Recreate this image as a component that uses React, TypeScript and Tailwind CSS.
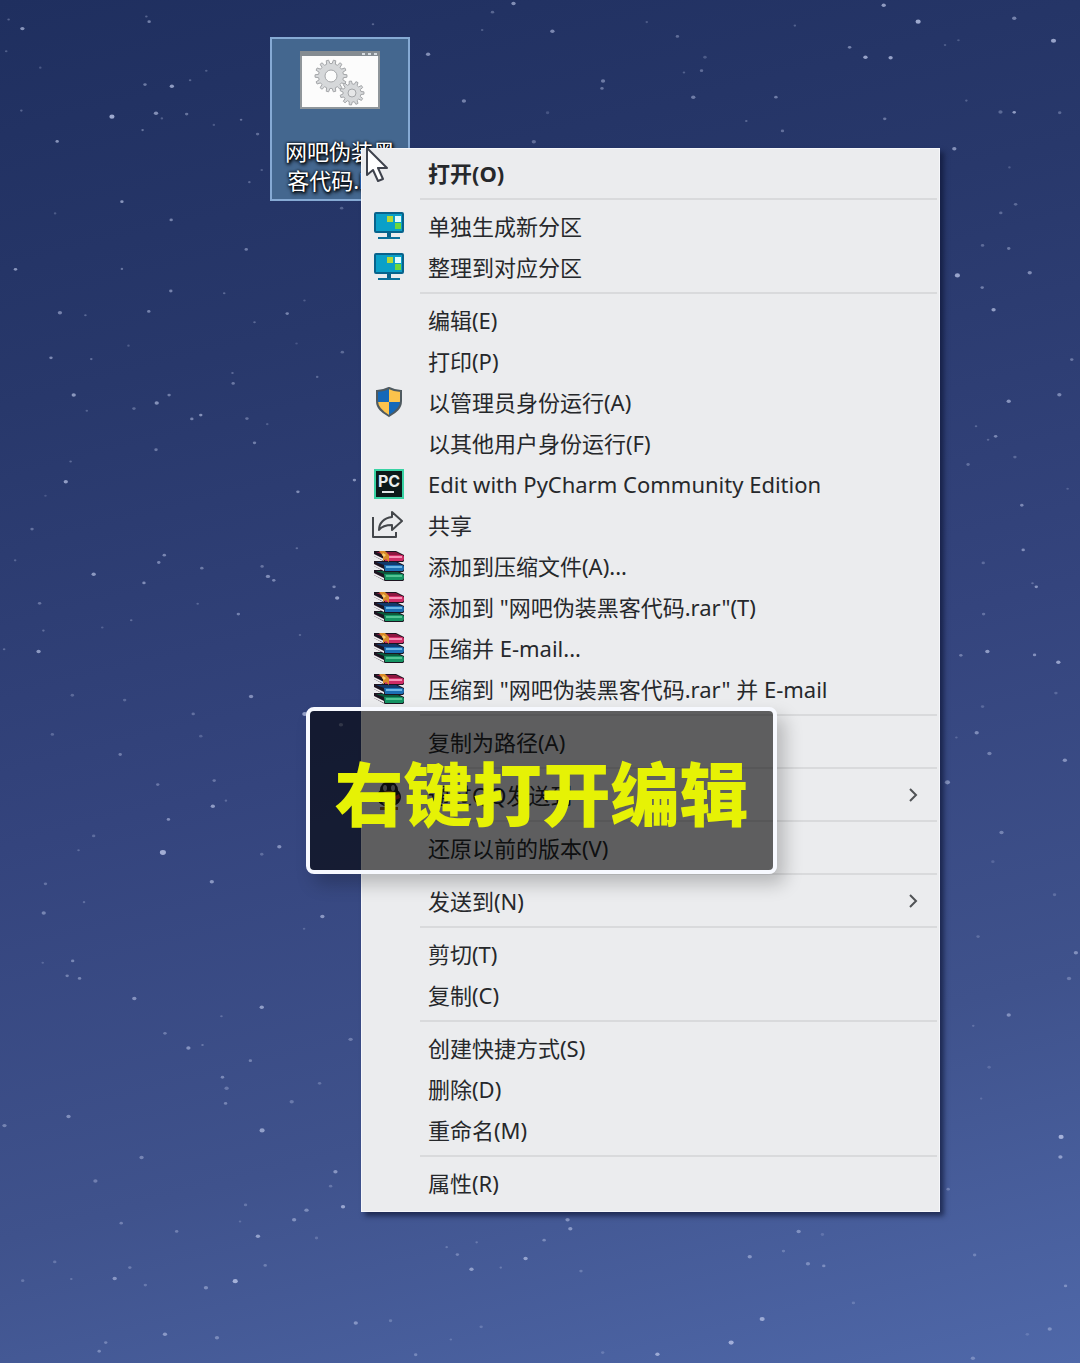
import type { ReactNode } from "react";

type Star = [x: number, y: number, radius: number, opacity: number];

/* Star positions in a 1568-unit square per quadrant of the sky. */
const skyTopLeft: Star[] = [
  [25, 45, 3, 0.4], [65, 66, 5, 0.75], [425, 38, 3, 0.4], [433, 50, 4, 0.6], [18, 118, 3, 0.35], [117, 156, 3, 0.3],
  [421, 195, 4, 0.55], [499, 199, 5, 0.8], [552, 185, 3, 0.4], [599, 163, 3, 0.35], [62, 255, 3, 0.4], [325, 269, 6, 0.9],
  [453, 261, 5, 0.7], [470, 273, 3, 0.35], [542, 263, 4, 0.5], [414, 300, 3, 0.5], [621, 288, 3, 0.3], [700, 276, 3, 0.5],
  [748, 309, 4, 0.45], [166, 326, 4, 0.75], [354, 465, 4, 0.75], [160, 492, 3, 0.3], [497, 507, 4, 0.6], [724, 420, 3, 0.4],
  [760, 392, 3, 0.35], [715, 575, 4, 0.55], [45, 621, 4, 0.75], [354, 620, 3, 0.5], [496, 671, 4, 0.6], [651, 676, 3, 0.4],
  [174, 721, 5, 0.6], [248, 727, 3, 0.4], [432, 718, 4, 0.6], [834, 723, 4, 0.6], [739, 743, 3, 0.4], [884, 693, 3, 0.3],
  [148, 825, 4, 0.65], [265, 828, 3, 0.45], [373, 797, 3, 0.3], [994, 812, 4, 0.4], [861, 792, 3, 0.25], [675, 860, 3, 0.4],
  [677, 884, 4, 0.5], [921, 869, 3, 0.4], [214, 911, 5, 0.75], [491, 911, 4, 0.55], [455, 929, 5, 0.7], [389, 942, 4, 0.4],
  [252, 947, 3, 0.35], [557, 966, 4, 0.6], [583, 957, 4, 0.7], [717, 965, 4, 0.45], [776, 978, 3, 0.3], [739, 1021, 4, 0.55],
  [453, 1037, 4, 0.5], [205, 1064, 3, 0.4], [191, 1111, 5, 0.8], [1029, 1107, 4, 0.7], [865, 1134, 4, 0.65], [93, 1220, 4, 0.45],
  [477, 1280, 4, 0.6], [461, 1297, 4, 0.6], [586, 1310, 4, 0.5], [862, 1264, 3, 0.4], [272, 1324, 5, 0.75], [418, 1344, 4, 0.65],
  [761, 1306, 4, 0.45], [778, 1329, 5, 0.65], [795, 1338, 4, 0.6], [970, 1353, 4, 0.6], [979, 1379, 5, 0.8], [115, 1391, 4, 0.45],
  [692, 1416, 4, 0.55], [574, 1392, 3, 0.35], [381, 1430, 3, 0.4], [297, 1447, 3, 0.3], [126, 1454, 3, 0.4], [112, 1502, 5, 0.75],
  [871, 1464, 3, 0.35], [1243, 125, 5, 0.7], [1347, 233, 5, 0.6], [1083, 56, 3, 0.4], [1430, 28, 4, 0.4], [1491, 8, 5, 0.7],
  [1400, 69, 3, 0.35], [1550, 327, 5, 0.45], [992, 480, 4, 0.35], [44, 1292, 3, 0.35], [12, 1497, 3, 0.4], [132, 1143, 3, 0.25],
];

const skyTopRight: Star[] = [
  [36, 72, 5, 0.65], [998, 12, 5, 0.8], [1098, 50, 6, 0.9], [1377, 42, 5, 0.6], [1491, 94, 6, 0.85], [899, 109, 4, 0.6],
  [945, 132, 5, 0.85], [1018, 133, 5, 0.85], [740, 59, 3, 0.35], [310, 51, 3, 0.3], [399, 84, 4, 0.45], [479, 132, 4, 0.3],
  [469, 163, 4, 0.45], [418, 167, 3, 0.35], [183, 187, 5, 0.55], [180, 204, 4, 0.5], [445, 224, 5, 0.55], [685, 224, 4, 0.55],
  [22, 260, 4, 0.25], [599, 279, 3, 0.4], [704, 302, 4, 0.45], [1001, 274, 4, 0.5], [1176, 104, 3, 0.3], [1215, 93, 3, 0.3],
  [1238, 232, 3, 0.35], [1377, 259, 4, 0.8], [1337, 258, 5, 0.4], [1509, 260, 4, 0.4], [1203, 343, 5, 0.7], [1363, 386, 3, 0.3],
  [1381, 471, 4, 0.4], [1338, 491, 4, 0.4], [1285, 566, 4, 0.4], [1361, 573, 4, 0.5], [1212, 635, 6, 0.85], [1422, 629, 5, 0.65],
  [1284, 663, 4, 0.55], [1317, 714, 5, 0.8], [1544, 829, 4, 0.5], [1508, 910, 5, 0.6], [1361, 925, 5, 0.7], [1266, 983, 3, 0.35],
  [1323, 1006, 4, 0.6], [1301, 1014, 3, 0.35], [1379, 1054, 4, 0.35], [1243, 1071, 4, 0.4], [1399, 1165, 4, 0.6], [1403, 1268, 4, 0.65],
  [1287, 1298, 4, 0.35], [1430, 1345, 3, 0.4], [1441, 1353, 4, 0.7], [1288, 1416, 4, 0.4], [1299, 1502, 5, 0.75], [1222, 1511, 4, 0.5],
  [1436, 1510, 4, 0.65], [1505, 1527, 5, 0.8], [1532, 1127, 3, 0.3],
];

const skyBottomLeft: Star[] = [
  [210, 35, 4, 0.35], [362, 46, 4, 0.35], [729, 38, 5, 0.65], [561, 78, 4, 0.4], [152, 125, 4, 0.35], [583, 129, 4, 0.3],
  [349, 171, 4, 0.5], [622, 231, 4, 0.45], [458, 240, 4, 0.45], [656, 277, 3, 0.35], [618, 290, 5, 0.75], [489, 320, 4, 0.65],
  [272, 358, 4, 0.35], [228, 391, 3, 0.35], [473, 396, 7, 0.9], [811, 383, 5, 0.65], [760, 400, 4, 0.35], [615, 463, 5, 0.7],
  [132, 468, 4, 0.4], [127, 535, 5, 0.55], [244, 510, 3, 0.35], [936, 543, 5, 0.7], [883, 571, 3, 0.3], [211, 645, 4, 0.55],
  [124, 649, 3, 0.3], [195, 679, 4, 0.5], [231, 685, 4, 0.55], [390, 731, 5, 0.65], [760, 751, 5, 0.75], [643, 772, 3, 0.35],
  [479, 811, 4, 0.45], [547, 845, 5, 0.65], [588, 838, 3, 0.4], [1018, 825, 5, 0.45], [727, 874, 4, 0.5], [646, 912, 4, 0.55],
  [658, 937, 5, 0.4], [655, 972, 4, 0.5], [928, 926, 4, 0.35], [847, 968, 5, 0.4], [199, 1002, 5, 0.6], [13, 1023, 5, 0.5],
  [761, 1034, 6, 0.75], [411, 1096, 5, 0.5], [277, 1150, 5, 0.45], [974, 1129, 5, 0.65], [960, 1162, 4, 0.35], [996, 1209, 5, 0.8],
  [890, 1217, 5, 0.55], [713, 1205, 4, 0.35], [854, 1239, 5, 0.6], [352, 1247, 4, 0.45], [697, 1243, 3, 0.3], [749, 1277, 5, 0.75],
  [513, 1266, 4, 0.45], [919, 1281, 4, 0.3], [159, 1336, 4, 0.35], [770, 1344, 4, 0.4], [377, 1349, 4, 0.4], [333, 1374, 5, 0.65],
  [207, 1375, 3, 0.35], [422, 1389, 4, 0.35], [683, 1380, 6, 0.9], [598, 1395, 5, 0.55], [66, 1379, 4, 0.35], [1033, 1476, 5, 0.6],
  [1134, 1471, 4, 0.35], [479, 1502, 5, 0.65], [630, 1510, 5, 0.5], [307, 1521, 4, 0.45], [288, 1541, 4, 0.5], [1207, 1549, 4, 0.45],
  [1297, 1302, 3, 0.35], [1328, 1319, 4, 0.45], [1384, 1291, 3, 0.35], [1369, 1353, 5, 0.7], [1526, 1328, 5, 0.75], [1454, 1349, 3, 0.35],
  [1397, 1485, 4, 0.3], [1309, 1514, 3, 0.3], [990, 103, 5, 0.6], [885, 78, 6, 0.8],
];

const skyBottomRight: Star[] = [
  [1268, 121, 5, 0.6], [1209, 132, 3, 0.3], [1305, 169, 5, 0.5], [1524, 184, 5, 0.65], [1183, 235, 6, 0.65], [1340, 350, 5, 0.5],
  [1315, 417, 4, 0.25], [1285, 61, 4, 0.3], [1498, 30, 4, 0.3], [1272, 589, 4, 0.3], [1556, 626, 5, 0.6], [1536, 685, 5, 0.4],
  [1361, 769, 5, 0.6], [1258, 794, 3, 0.3], [1304, 889, 4, 0.25], [1513, 1049, 6, 0.9], [1511, 1095, 5, 0.7], [1185, 1169, 4, 0.45],
  [80, 1239, 5, 0.65], [88, 1260, 5, 0.65], [12, 1286, 4, 0.5], [751, 1266, 5, 0.55], [820, 1273, 4, 0.25], [707, 1311, 4, 0.35],
  [609, 1324, 5, 0.6], [778, 1340, 5, 0.5], [824, 1345, 4, 0.5], [119, 1357, 4, 0.35], [910, 1430, 4, 0.3], [645, 1467, 6, 0.8],
  [555, 1521, 6, 0.85], [341, 1548, 5, 0.8], [1262, 1320, 4, 0.4], [1526, 1391, 4, 0.5], [1480, 1490, 5, 0.5], [1415, 1502, 4, 0.25],
  [1257, 1557, 5, 0.45], [182, 1544, 4, 0.3], [1494, 493, 4, 0.3], [1281, 961, 3, 0.25],
];

const skyQuadrants = [
  { stars: skyTopLeft, transform: "translate(0 0) scale(0.3444 0.4337)" },
  { stars: skyTopRight, transform: "translate(540 0) scale(0.3444 0.4337)" },
  { stars: skyBottomLeft, transform: "translate(0 680) scale(0.3444 0.4356)" },
  { stars: skyBottomRight, transform: "translate(540 680) scale(0.3444 0.4356)" },
];

function NightSky() {
  return (
    <svg
      className="absolute inset-0 h-full w-full opacity-85"
      viewBox="0 0 1080 1363"
      preserveAspectRatio="xMidYMid slice"
      aria-hidden="true"
    >
      {skyQuadrants.map(({ stars, transform }) => (
        <g key={transform} transform={transform} fill="#c3cdee">
          {stars.map(([x, y, r, opacity]) => (
            <ellipse key={`${x}-${y}`} cx={x} cy={y} rx={r * 1.25} ry={r * 0.8} opacity={opacity} />
          ))}
        </g>
      ))}
    </svg>
  );
}

function gearPath(cx: number, cy: number, outer: number, inner: number, teeth: number) {
  const points: string[] = [];
  const step = (Math.PI * 2) / teeth;
  for (let i = 0; i < teeth; i++) {
    const a = i * step;
    const corners: [number, number][] = [
      [a - step * 0.3, inner],
      [a - step * 0.17, outer],
      [a + step * 0.17, outer],
      [a + step * 0.3, inner],
    ];
    for (const [angle, r] of corners) {
      points.push(`${(cx + Math.cos(angle) * r).toFixed(2)} ${(cy + Math.sin(angle) * r).toFixed(2)}`);
    }
  }
  return `M${points.join("L")}Z`;
}

function BatchFileIcon() {
  return (
    <svg className="h-[58px] w-20" viewBox="0 0 80 58" aria-hidden="true">
      <rect x="1" y="1" width="78" height="56" fill="#fcfcfc" stroke="#8f969b" strokeWidth="2" />
      <rect x="0" y="0" width="80" height="5" fill="#858c92" />
      <path d="M62 2h3v2h-3zM68 2h3v2h-3zM74 2h3v2h-3z" fill="#d5dbe0" />
      <g fill="#d6d8da" stroke="#a4a6a9" strokeWidth="1">
        <path d={gearPath(31, 25, 16, 12.5, 14)} />
        <circle cx="31" cy="25" r="6" fill="#fcfcfc" />
        <path d={gearPath(52, 42, 12, 9, 11)} />
        <circle cx="52" cy="42" r="4" fill="#e6e7e8" />
      </g>
    </svg>
  );
}

function MonitorIcon() {
  return (
    <svg className="size-8" viewBox="0 0 32 32" aria-hidden="true">
      <rect x="2" y="3" width="28" height="19" rx="1" fill="#0aa0c8" stroke="#08638c" strokeWidth="2" />
      <rect x="14" y="6" width="6" height="6" fill="#b5d934" />
      <rect x="22" y="6" width="6" height="6" fill="#dffaff" />
      <rect x="22" y="13" width="6" height="6" fill="#6ed83c" />
      <path d="M14 22h4v5h-4z" fill="#08638c" />
      <path d="M5 27h22v2H5z" fill="#0a6f9a" />
    </svg>
  );
}

const shield = "M16 2c4 2 8 3 12 3v10c0 7-5 11-12 15C9 26 4 22 4 15V5c4 0 8-1 12-3z";

function ShieldIcon() {
  return (
    <svg className="size-8" viewBox="0 0 32 32" aria-hidden="true">
      <clipPath id="shield-shape">
        <path d={shield} />
      </clipPath>
      <g clipPath="url(#shield-shape)">
        <path d="M0 0h16v16H0zM16 16h16v16H16z" fill="#1468b8" />
        <path d="M16 0h16v16H16zM0 16h16v16H0z" fill="#fbc34c" />
      </g>
      <path d={shield} fill="none" stroke="#4f5a60" strokeWidth="2" />
    </svg>
  );
}

function PyCharmIcon() {
  return (
    <span className="flex size-[30px] flex-col items-start justify-between border-2 border-[#38d3a4] bg-[#0c1a1a] px-0.5 pt-0.5 pb-1">
      <span className="font-['Inter',sans-serif] text-base leading-4 font-bold text-[#e8eeee]">PC</span>
      <span className="ml-1 h-0.5 w-3 bg-[#dfe6e6]" />
    </span>
  );
}

function ShareIcon() {
  return (
    <svg
      className="mr-1 size-8"
      viewBox="0 0 32 32"
      fill="none"
      stroke="#44474b"
      strokeWidth="2"
      strokeLinejoin="round"
      aria-hidden="true"
    >
      <path d="M2 8v20h23v-5" />
      <path d="M21 3l10 9-10 9v-5c-6 0-10 1-13 5 0-7 5-12 13-13z" />
    </svg>
  );
}

const bookColors = [
  { y: 20, cover: "#0b5a3c", spine: "#159463", shine: "#52c493" },
  { y: 11, cover: "#123a6c", spine: "#1c6fb4", shine: "#6db6e6" },
  { y: 1, cover: "#8e1640", spine: "#cf2c66", shine: "#f890b6" },
];

function ArchiveIcon() {
  return (
    <svg className="size-8" viewBox="0 0 32 32" aria-hidden="true">
      {bookColors.map(({ y, cover, spine, shine }) => (
        <g key={y} transform={`translate(0 ${y})`}>
          <path d="M1 0h22l8 4v6l-1 1H12L1 5z" fill="#1c1420" />
          <path d="M3 1h20l6 3H11z" fill={cover} />
          <path d="M11 4h18q2 0 2 3t-2 3H12z" fill={spine} />
          <path d="M13 5h16v2H13z" fill={shine} />
          <path d="M1 3l10 5v2L1 5z" fill="#f2eff1" />
        </g>
      ))}
      <path d="M6 1h6l4 4v7l-3-3-3 2V6z" fill="#d88a28" />
      <path d="M10 3l3 2-2 2-2-2z" fill="#f8d070" />
    </svg>
  );
}

function QQIcon() {
  return (
    <svg className="size-8" viewBox="0 0 32 32" aria-hidden="true">
      <ellipse cx="16" cy="18" rx="12" ry="10" fill="#202124" />
      <ellipse cx="16" cy="11" rx="9" ry="9" fill="#202124" />
      <ellipse cx="16" cy="21" rx="7" ry="7" fill="#8f8f8f" />
      <path d="M6 15c6 4 14 4 20 0l1 4c-7 4-15 4-22 0z" fill="#b8322c" />
      <ellipse cx="12" cy="9" rx="2" ry="3" fill="#aaa" />
      <ellipse cx="20" cy="9" rx="2" ry="3" fill="#aaa" />
      <ellipse cx="16" cy="14" rx="6" ry="2" fill="#c08020" />
      <path d="M7 28h8v3H7zM17 28h8v3h-8z" fill="#a06a1c" />
    </svg>
  );
}

function SubmenuArrow() {
  return (
    <svg className="mr-5 h-4 w-3" viewBox="0 0 12 16" fill="none" stroke="#505255" strokeWidth="2" aria-hidden="true">
      <path d="M3 2l6 6-6 6" />
    </svg>
  );
}

function Pointer() {
  return (
    <svg className="absolute top-[147px] left-[366px] h-9 w-6" viewBox="0 0 24 36" aria-hidden="true">
      <path
        d="M1 1v27l6-5 5 11 5-2-5-11h9z"
        fill="#fff"
        stroke="#3f434d"
        strokeWidth="2"
        strokeLinejoin="round"
      />
    </svg>
  );
}

type MenuEntry = { label: string; icon?: ReactNode; bold?: boolean; submenu?: boolean };

const menuGroups: MenuEntry[][] = [
  [{ label: "打开(O)", bold: true }],
  [
    { label: "单独生成新分区", icon: <MonitorIcon /> },
    { label: "整理到对应分区", icon: <MonitorIcon /> },
  ],
  [
    { label: "编辑(E)" },
    { label: "打印(P)" },
    { label: "以管理员身份运行(A)", icon: <ShieldIcon /> },
    { label: "以其他用户身份运行(F)" },
    { label: "Edit with PyCharm Community Edition", icon: <PyCharmIcon /> },
    { label: "共享", icon: <ShareIcon /> },
    { label: "添加到压缩文件(A)...", icon: <ArchiveIcon /> },
    { label: '添加到 "网吧伪装黑客代码.rar"(T)', icon: <ArchiveIcon /> },
    { label: "压缩并 E-mail...", icon: <ArchiveIcon /> },
    { label: '压缩到 "网吧伪装黑客代码.rar" 并 E-mail', icon: <ArchiveIcon /> },
  ],
  [{ label: "复制为路径(A)" }],
  [{ label: "通过QQ发送到", icon: <QQIcon />, submenu: true }],
  [{ label: "还原以前的版本(V)" }],
  [{ label: "发送到(N)", submenu: true }],
  [{ label: "剪切(T)" }, { label: "复制(C)" }],
  [{ label: "创建快捷方式(S)" }, { label: "删除(D)" }, { label: "重命名(M)" }],
  [{ label: "属性(R)" }],
];

function MenuItem({ label, icon, bold, submenu }: MenuEntry) {
  return (
    <button
      type="button"
      role="menuitem"
      aria-haspopup={submenu ? "menu" : undefined}
      className="flex h-[41px] w-full items-center text-left hover:bg-white"
    >
      <span className="flex w-[54px] shrink-0 justify-center">{icon}</span>
      <span className={bold ? "ml-3 flex-1 font-bold whitespace-nowrap" : "ml-3 flex-1 whitespace-nowrap"}>{label}</span>
      {submenu && <SubmenuArrow />}
    </button>
  );
}

function ContextMenu() {
  return (
    <div
      role="menu"
      aria-label="文件菜单"
      className="absolute top-[148px] left-[361px] w-[579px] border border-[#f6f7fa] bg-[#ebecee] pt-[3px] pb-2 text-[22px] leading-7 text-[#26282b] shadow-[4px_4px_5px_rgba(12,20,50,0.65)]"
    >
      {menuGroups.map((group, index) => (
        <div key={group[0].label} role="group">
          {index > 0 && (
            <div role="separator" className="flex h-3 items-center pr-0.5 pl-[58px]">
              <div className="h-0.5 w-full bg-[#d9dadc]" />
            </div>
          )}
          {group.map((entry) => (
            <MenuItem key={entry.label} {...entry} />
          ))}
        </div>
      ))}
    </div>
  );
}

function DesktopFile() {
  return (
    <button
      type="button"
      className="absolute top-[37px] left-[270px] flex w-[140px] flex-col items-center border-2 border-[#86aad4] bg-[#44678f] pt-3 pb-1 text-[22px] leading-[29px] text-white"
    >
      <BatchFileIcon />
      <span className="mt-7 w-28 text-center [text-shadow:1px_1px_3px_#000,0_0_3px_#000,1px_2px_4px_#000]">
        网吧伪装黑
        <br />
        客代码.bat
      </span>
    </button>
  );
}

function Caption() {
  return (
    <div className="absolute top-[707px] left-[306px] flex h-[167px] w-[471px] items-center justify-center rounded-lg border-4 border-[#f7f9ff] bg-black/60 pt-2 shadow-[8px_10px_18px_rgba(0,0,0,0.22)]">
      <p className="text-[69px] leading-none font-black whitespace-nowrap text-[#e6f205]">右键打开编辑</p>
    </div>
  );
}

export default function App() {
  return (
    <main className="relative min-h-screen w-full overflow-hidden bg-[linear-gradient(166deg,#1f2f5f_0%,#28386b_25%,#34447d_52%,#3f528c_76%,#4f68a9_100%)] font-['Noto_Sans','Noto_Sans_CJK_SC',sans-serif]">
      <NightSky />
      <DesktopFile />
      <ContextMenu />
      <Caption />
      <Pointer />
    </main>
  );
}
